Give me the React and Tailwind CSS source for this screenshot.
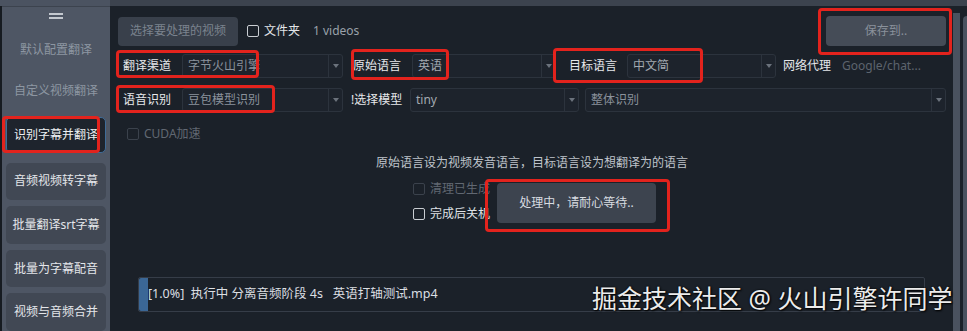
import React from 'react';

const font = { fontFamily: "'Noto Sans', 'Noto Sans CJK SC', sans-serif" };

function Combo({ text, width, grow, dim }) {
    return (
        <div className={`h-[24px] flex border border-[#2c333d] rounded-[3px] bg-[#1d232c] ${grow ? 'flex-1' : ''} ${width || ''}`}>
            <div className={`flex-1 flex items-center pl-[5px] text-[12px] ${dim ? 'text-[#8b929c]' : 'text-[#a3a9b1]'}`}>
                {text}
            </div>
            <div className="w-[14px] border-l border-[#2c333d] flex items-center justify-center">
                <div className="w-0 h-0 border-l-[3px] border-r-[3px] border-t-[4px] border-l-transparent border-r-transparent border-t-[#6b727c]" />
            </div>
        </div>
    );
}

function Check({ dim, label }) {
    return (
        <div className="flex items-center h-[12px]">
            <div className={`w-[12px] h-[12px] shrink-0 border rounded-[2px] ${dim ? 'border-[#3b424c]' : 'border-[#c9cdd2]'}`} />
            <span className={`ml-[5px] text-[12px] leading-none whitespace-nowrap ${dim ? 'text-[#616872]' : 'text-[#dfe2e6]'}`}>{label}</span>
        </div>
    );
}

function SideButton({ children, className }) {
    return (
        <div className={`mx-[4px] h-[38px] rounded-[5px] bg-[#414854] flex items-center justify-center text-[12px] text-[#e4e6ea] ${className || ''}`}>
            {children}
        </div>
    );
}

function Mark({ className }) {
    return <div className={`absolute border-[3px] border-[#e3231d] rounded-[4px] pointer-events-none ${className}`} />;
}

export default function App() {
    return (
        <div className="relative w-[967px] h-[331px] overflow-hidden bg-[#1b2129] flex flex-col" style={font}>
            <div className="h-[6px] flex shrink-0">
                <div className="w-[110px] bg-[#4b5361]" />
                <div className="flex-1 bg-[#3c434e]" />
            </div>
            <div className="flex flex-1 min-h-0">
                <div className="w-[2px] bg-[#161b21]" />
                {/* sidebar */}
                <div className="w-[108px] bg-[#4e5664] flex flex-col border-t border-[#3c434e]">
                    <div className="flex flex-col items-center pt-[6px] gap-[2px] h-[22px]">
                        <div className="w-[14px] h-[2px] bg-[#c3c8cf]" />
                        <div className="w-[14px] h-[2px] bg-[#c3c8cf]" />
                    </div>
                    <div className="h-[42px] flex items-center justify-center text-[12px] text-[#8d96a2]">默认配置翻译</div>
                    <div className="h-[42px] flex items-center justify-center text-[12px] text-[#8d96a2]">自定义视频翻译</div>
                    <div className="mx-[4px] mt-[5px] h-[36px] rounded-[5px] bg-[#1e242d] border border-[#3f6c98] flex items-center justify-center text-[12px] text-[#eef0f2]">
                        识别字幕并翻译
                    </div>
                    <SideButton className="mt-[10px]">音频视频转字幕</SideButton>
                    <SideButton className="mt-[6px]">批量翻译srt字幕</SideButton>
                    <SideButton className="mt-[6px]">批量为字幕配音</SideButton>
                    <SideButton className="mt-[6px]">视频与音频合并</SideButton>
                </div>

                {/* main */}
                <div className="w-[840px] flex flex-col pl-[8px] pr-[4px]">
                    <div className="flex items-center pt-[10px]">
                        <div className="w-[120px] h-[29px] rounded-[4px] bg-[#39404b] flex items-center justify-center text-[12px] text-[#7b838e]">
                            选择要处理的视频
                        </div>
                        <div className="ml-[9px] flex items-center">
                            <div className="w-[12px] h-[12px] border border-[#c9cdd2] rounded-[2px]" />
                            <span className="ml-[5px] text-[12px] text-[#e2e5e8]">文件夹</span>
                        </div>
                        <span className="ml-[13px] text-[12px] text-[#9aa1aa]">1 videos</span>
                        <div className="ml-auto w-[120px] h-[30px] rounded-[4px] bg-[#454c57] flex items-center justify-center text-[12px] text-[#8a919b]">
                            保存到..
                        </div>
                    </div>

                    <div className="flex items-center mt-[8px]">
                        <div className="w-[64px] pl-[5px] text-[12px] text-[#e6e8eb]">翻译渠道</div>
                        <Combo width="w-[161px]" text="字节火山引擎" dim />
                        <div className="w-[69px] pl-[10px] text-[12px] text-[#e6e8eb]">原始语言</div>
                        <Combo width="w-[144px]" text="英语" />
                        <div className="w-[71px] pl-[13px] text-[12px] text-[#e6e8eb]">目标语言</div>
                        <Combo width="w-[149px]" text="中文简" />
                        <div className="w-[60px] pl-[7px] text-[12px] text-[#e6e8eb]">网络代理</div>
                        <div className="flex-1 h-[24px] flex items-center pl-[6px] text-[12px] text-[#5d646e]">Google/chat...</div>
                    </div>

                    <div className="flex items-center mt-[10px]">
                        <div className="w-[64px] pl-[5px] text-[12px] text-[#e6e8eb]">语音识别</div>
                        <Combo width="w-[161px]" text="豆包模型识别" dim />
                        <div className="w-[67px] pl-[8px] text-[12px] text-[#e6e8eb]">!选择模型</div>
                        <Combo width="w-[169px]" text="tiny" />
                        <div className="w-[6px]" />
                        <Combo grow text="整体识别" dim />
                    </div>

                    <div className="mt-[16px] ml-[9px]">
                        <Check dim label="CUDA加速" />
                    </div>

                    <div className="mt-[15px] text-center text-[12px] leading-[16px] text-[#bfc4cb]">
                        原始语言设为视频发音语言，目标语言设为想翻译为的语言
                    </div>

                    <div className="flex mt-[12px] ml-[295px]">
                        <div className="w-[84px] h-[40px] flex flex-col">
                            <Check dim label="清理已生成" />
                            <div className="mt-[13px]">
                                <Check label="完成后关机" />
                            </div>
                        </div>
                        <div className="w-[159px] h-[40px] rounded-[4px] bg-[#3d444f] flex items-center justify-center text-[12px] text-[#d8dce1]">
                            处理中，请耐心等待..
                        </div>
                    </div>

                    <div className="mt-[54px] ml-[20px] w-[787px] h-[35px] border border-[#363d48] rounded-[2px] flex">
                        <div className="w-[9px] bg-[#3b6796] rounded-l-[2px]" />
                        <div className="flex items-center text-[12.5px] text-[#dcdfe3] whitespace-pre">
                            [1.0%]  执行中 分离音频阶段 4s   英语打轴测试.mp4
                        </div>
                    </div>
                </div>

                {/* right edge */}
                <div className="w-[3px]" />
                <div className="w-[7px] mt-[7px] bg-[#4a525f]" />
                <div className="w-[3px]" />
                <div className="w-[4px] mt-[10px] bg-[#4a525f] rounded-tl-[4px]" />
            </div>

            {/* annotations */}
            <Mark className="left-[2px] top-[116px] w-[98px] h-[37px]" />
            <Mark className="left-[116px] top-[50px] w-[143px] h-[28px]" />
            <Mark className="left-[116px] top-[85px] w-[159px] h-[28px]" />
            <Mark className="left-[351px] top-[49px] w-[98px] h-[31px]" />
            <Mark className="left-[553px] top-[48px] w-[150px] h-[35px]" />
            <Mark className="left-[818px] top-[8px] w-[134px] h-[47px]" />
            <Mark className="left-[485px] top-[179px] w-[185px] h-[53px]" />

            <div className="absolute left-[592px] top-[283px] text-[25px] leading-[30px] text-[#ececec] whitespace-nowrap [text-shadow:0_0_2px_#000,1px_1px_2px_#000]">
                掘金技术社区 @ 火山引擎许同学
            </div>
        </div>
    );
}
